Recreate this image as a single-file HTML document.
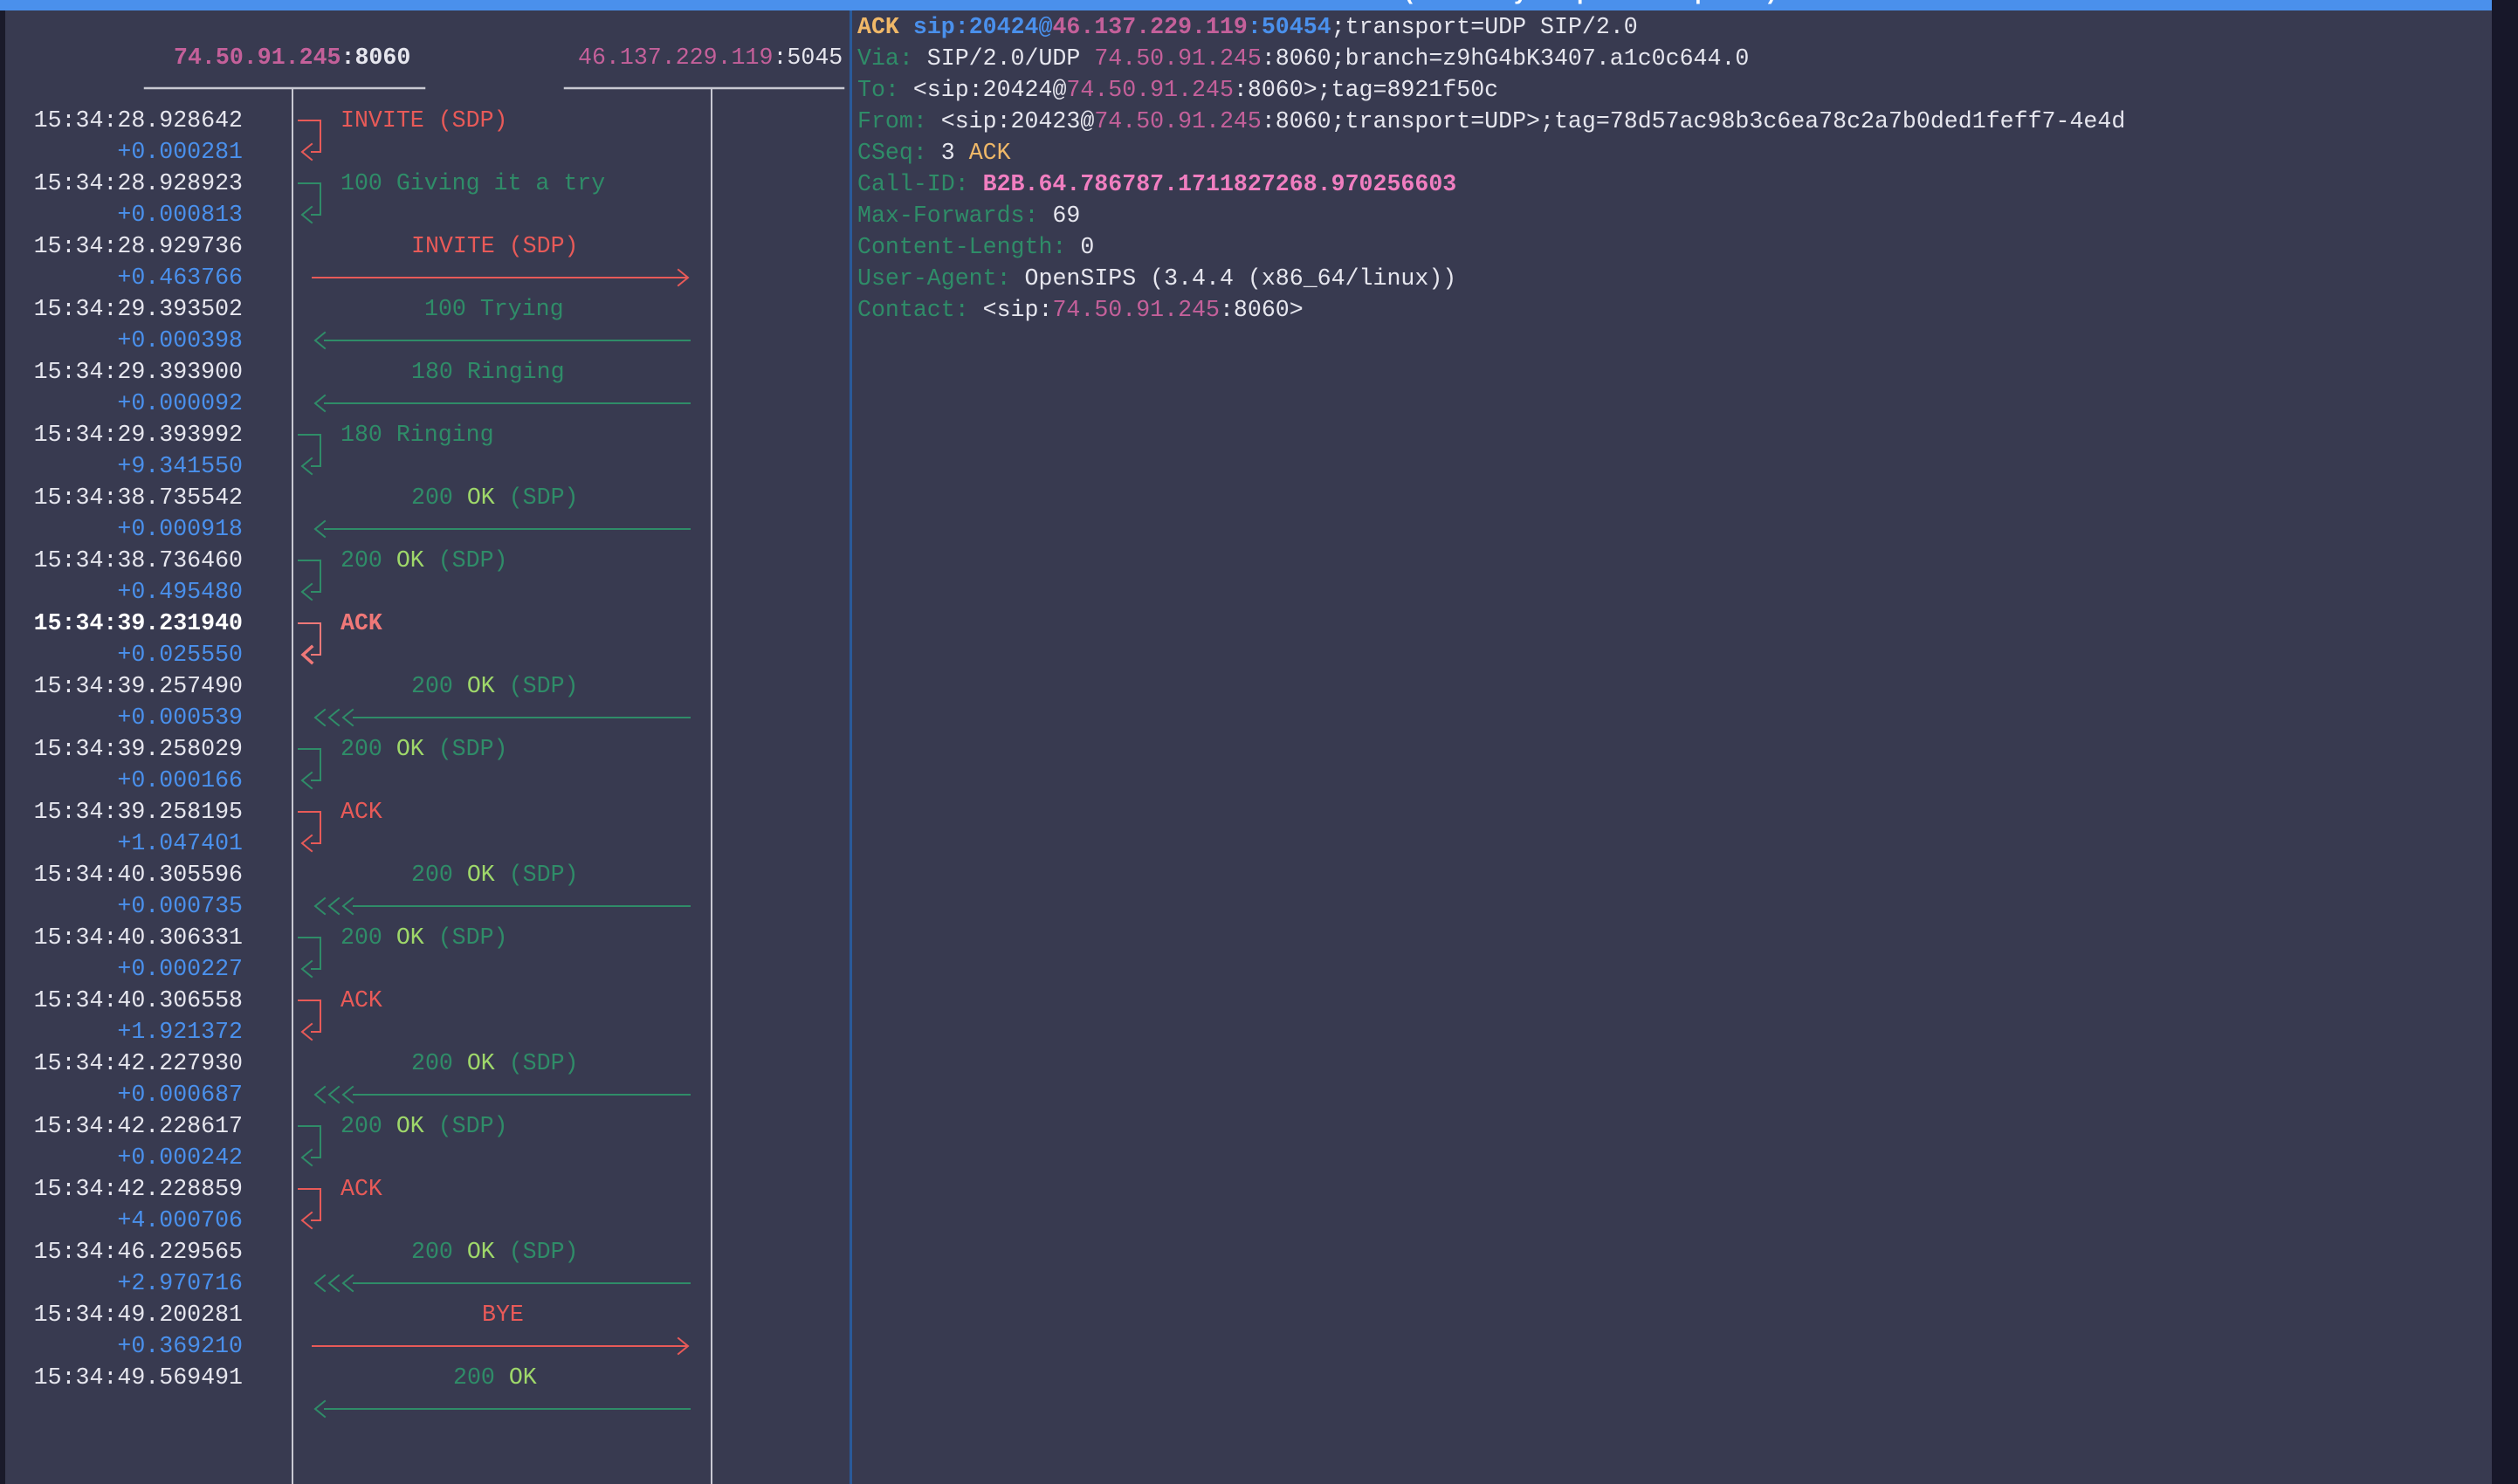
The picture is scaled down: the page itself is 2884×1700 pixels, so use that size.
<!DOCTYPE html>
<html><head><meta charset="utf-8"><style>
*{margin:0;padding:0;box-sizing:border-box}
html,body{width:2884px;height:1700px;overflow:hidden;background:#383a50}
body{position:relative;font-family:"Liberation Mono","DejaVu Sans Mono",monospace;font-size:26.6px;color:#e6e6ee}
.a{position:absolute;white-space:pre;line-height:36px;height:36px}
.ts{left:0;width:278px;text-align:right}
.d{color:#4a90ec}
.r{color:#e85a58}.rb{color:#f07878;font-weight:bold}
.g{color:#2f8c68}.ok{color:#9fd86a}
.ip{color:#c4609a}.w{color:#e6e6ee}
.o{color:#f0b868}
</style></head><body>
<div style="position:absolute;left:0;top:0;width:6px;height:1700px;background:#1a1a2a"></div>
<div style="position:absolute;left:2854px;top:0;width:30px;height:1700px;background:#171729"></div>
<div style="position:absolute;left:0;top:0;width:2854px;height:12px;background:#4a90ec;overflow:hidden">
<div class="a" style="left:824px;top:-26px;color:#fff;font-weight:bold">Call Flow for B2B.64.786787.1711827268.970256603 (Color by Request/Response)</div></div>
<div style="position:absolute;left:973px;top:12px;width:3px;height:1688px;background:#2a5a9a"></div>

<div class="a" style="left:199px;top:48px;font-weight:bold"><span class="ip">74.50.91.245</span>:8060</div>
<div class="a" style="left:662px;top:48px"><span class="ip">46.137.229.119</span>:5045</div>

<svg style="position:absolute;left:0;top:0" width="980" height="1700" fill="none" stroke-linecap="square">
<g stroke="#c8c8d2" stroke-width="2.5"><path d="M166 101H486M647 101H966"/></g>
<g stroke="#c8c8d2" stroke-width="2"><path d="M335 101V1700M815 101V1700"/></g>
<g stroke-width="2" stroke-linejoin="miter">
<!-- self arrows -->
<g stroke="#e85a58">
<path d="M342 138H367V174H357M357 165L346 174L357 183"/>
<path d="M342 930H367V966H357M357 957L346 966L357 975"/>
<path d="M342 1146H367V1182H357M357 1173L346 1182L357 1191"/>
<path d="M342 1362H367V1398H357M357 1389L346 1398L357 1407"/>
</g>
<path stroke="#f07878" d="M342 714H367V750H357"/>
<path stroke="#f07878" stroke-width="3.5" d="M357 741L347 750L357 759"/>
<g stroke="#2f8c68">
<path d="M342 210H367V246H357M357 237L346 246L357 255"/>
<path d="M342 498H367V534H357M357 525L346 534L357 543"/>
<path d="M342 642H367V678H357M357 669L346 678L357 687"/>
<path d="M342 858H367V894H357M357 885L346 894L357 903"/>
<path d="M342 1074H367V1110H357M357 1101L346 1110L357 1119"/>
<path d="M342 1290H367V1326H357M357 1317L346 1326L357 1335"/>
</g>
<!-- right arrows -->
<g stroke="#e85a58">
<path d="M358 318H786M777 309L788 318L777 327"/>
<path d="M358 1542H786M777 1533L788 1542L777 1551"/>
</g>
<!-- left arrows -->
<g stroke="#2f8c68">
<path d="M372 390H790M372 381L361 390L372 399"/>
<path d="M372 462H790M372 453L361 462L372 471"/>
<path d="M372 606H790M372 597L361 606L372 615"/>
<path d="M372 1614H790M372 1605L361 1614L372 1623"/>
<path d="M405 822H790M372 813L361 822L372 831M388 813L377 822L388 831M404 813L393 822L404 831"/>
<path d="M405 1038H790M372 1029L361 1038L372 1047M388 1029L377 1038L388 1047M404 1029L393 1038L404 1047"/>
<path d="M405 1254H790M372 1245L361 1254L372 1263M388 1245L377 1254L388 1263M404 1245L393 1254L404 1263"/>
<path d="M405 1470H790M372 1461L361 1470L372 1479M388 1461L377 1470L388 1479M404 1461L393 1470L404 1479"/>
</g>
</g>
</svg>

<!-- timestamps -->
<div class="a ts" style="top:120px">15:34:28.928642</div><div class="a ts d" style="top:156px">+0.000281</div>
<div class="a ts" style="top:192px">15:34:28.928923</div><div class="a ts d" style="top:228px">+0.000813</div>
<div class="a ts" style="top:264px">15:34:28.929736</div><div class="a ts d" style="top:300px">+0.463766</div>
<div class="a ts" style="top:336px">15:34:29.393502</div><div class="a ts d" style="top:372px">+0.000398</div>
<div class="a ts" style="top:408px">15:34:29.393900</div><div class="a ts d" style="top:444px">+0.000092</div>
<div class="a ts" style="top:480px">15:34:29.393992</div><div class="a ts d" style="top:516px">+9.341550</div>
<div class="a ts" style="top:552px">15:34:38.735542</div><div class="a ts d" style="top:588px">+0.000918</div>
<div class="a ts" style="top:624px">15:34:38.736460</div><div class="a ts d" style="top:660px">+0.495480</div>
<div class="a ts" style="top:696px;font-weight:bold;color:#fff">15:34:39.231940</div><div class="a ts d" style="top:732px">+0.025550</div>
<div class="a ts" style="top:768px">15:34:39.257490</div><div class="a ts d" style="top:804px">+0.000539</div>
<div class="a ts" style="top:840px">15:34:39.258029</div><div class="a ts d" style="top:876px">+0.000166</div>
<div class="a ts" style="top:912px">15:34:39.258195</div><div class="a ts d" style="top:948px">+1.047401</div>
<div class="a ts" style="top:984px">15:34:40.305596</div><div class="a ts d" style="top:1020px">+0.000735</div>
<div class="a ts" style="top:1056px">15:34:40.306331</div><div class="a ts d" style="top:1092px">+0.000227</div>
<div class="a ts" style="top:1128px">15:34:40.306558</div><div class="a ts d" style="top:1164px">+1.921372</div>
<div class="a ts" style="top:1200px">15:34:42.227930</div><div class="a ts d" style="top:1236px">+0.000687</div>
<div class="a ts" style="top:1272px">15:34:42.228617</div><div class="a ts d" style="top:1308px">+0.000242</div>
<div class="a ts" style="top:1344px">15:34:42.228859</div><div class="a ts d" style="top:1380px">+4.000706</div>
<div class="a ts" style="top:1416px">15:34:46.229565</div><div class="a ts d" style="top:1452px">+2.970716</div>
<div class="a ts" style="top:1488px">15:34:49.200281</div><div class="a ts d" style="top:1524px">+0.369210</div>
<div class="a ts" style="top:1560px">15:34:49.569491</div>

<!-- labels -->
<div class="a r" style="left:390px;top:120px">INVITE (SDP)</div>
<div class="a g" style="left:390px;top:192px">100 Giving it a try</div>
<div class="a r" style="left:471px;top:264px">INVITE (SDP)</div>
<div class="a g" style="left:486px;top:336px">100 Trying</div>
<div class="a g" style="left:471px;top:408px">180 Ringing</div>
<div class="a g" style="left:390px;top:480px">180 Ringing</div>
<div class="a g" style="left:471px;top:552px">200 <span class="ok">OK</span> (SDP)</div>
<div class="a g" style="left:390px;top:624px">200 <span class="ok">OK</span> (SDP)</div>
<div class="a rb" style="left:390px;top:696px">ACK</div>
<div class="a g" style="left:471px;top:768px">200 <span class="ok">OK</span> (SDP)</div>
<div class="a g" style="left:390px;top:840px">200 <span class="ok">OK</span> (SDP)</div>
<div class="a r" style="left:390px;top:912px">ACK</div>
<div class="a g" style="left:471px;top:984px">200 <span class="ok">OK</span> (SDP)</div>
<div class="a g" style="left:390px;top:1056px">200 <span class="ok">OK</span> (SDP)</div>
<div class="a r" style="left:390px;top:1128px">ACK</div>
<div class="a g" style="left:471px;top:1200px">200 <span class="ok">OK</span> (SDP)</div>
<div class="a g" style="left:390px;top:1272px">200 <span class="ok">OK</span> (SDP)</div>
<div class="a r" style="left:390px;top:1344px">ACK</div>
<div class="a g" style="left:471px;top:1416px">200 <span class="ok">OK</span> (SDP)</div>
<div class="a r" style="left:552px;top:1488px">BYE</div>
<div class="a g" style="left:519px;top:1560px">200 <span class="ok">OK</span></div>

<!-- right pane -->
<div class="a" style="left:982px;top:13px"><b class="o">ACK</b> <b class="d">sip:20424@</b><b class="ip">46.137.229.119</b><b class="d">:50454</b>;transport=UDP SIP/2.0</div>
<div class="a" style="left:982px;top:49px"><span class="g">Via:</span> SIP/2.0/UDP <span class="ip">74.50.91.245</span>:8060;branch=z9hG4bK3407.a1c0c644.0</div>
<div class="a" style="left:982px;top:85px"><span class="g">To:</span> &lt;sip:20424@<span class="ip">74.50.91.245</span>:8060&gt;;tag=8921f50c</div>
<div class="a" style="left:982px;top:121px"><span class="g">From:</span> &lt;sip:20423@<span class="ip">74.50.91.245</span>:8060;transport=UDP&gt;;tag=78d57ac98b3c6ea78c2a7b0ded1feff7-4e4d</div>
<div class="a" style="left:982px;top:157px"><span class="g">CSeq:</span> 3 <span class="o">ACK</span></div>
<div class="a" style="left:982px;top:193px"><span class="g">Call-ID:</span> <b style="color:#f07ec0">B2B.64.786787.1711827268.970256603</b></div>
<div class="a" style="left:982px;top:229px"><span class="g">Max-Forwards:</span> 69</div>
<div class="a" style="left:982px;top:265px"><span class="g">Content-Length:</span> 0</div>
<div class="a" style="left:982px;top:301px"><span class="g">User-Agent:</span> OpenSIPS (3.4.4 (x86_64/linux))</div>
<div class="a" style="left:982px;top:337px"><span class="g">Contact:</span> &lt;sip:<span class="ip">74.50.91.245</span>:8060&gt;</div>
</body></html>
